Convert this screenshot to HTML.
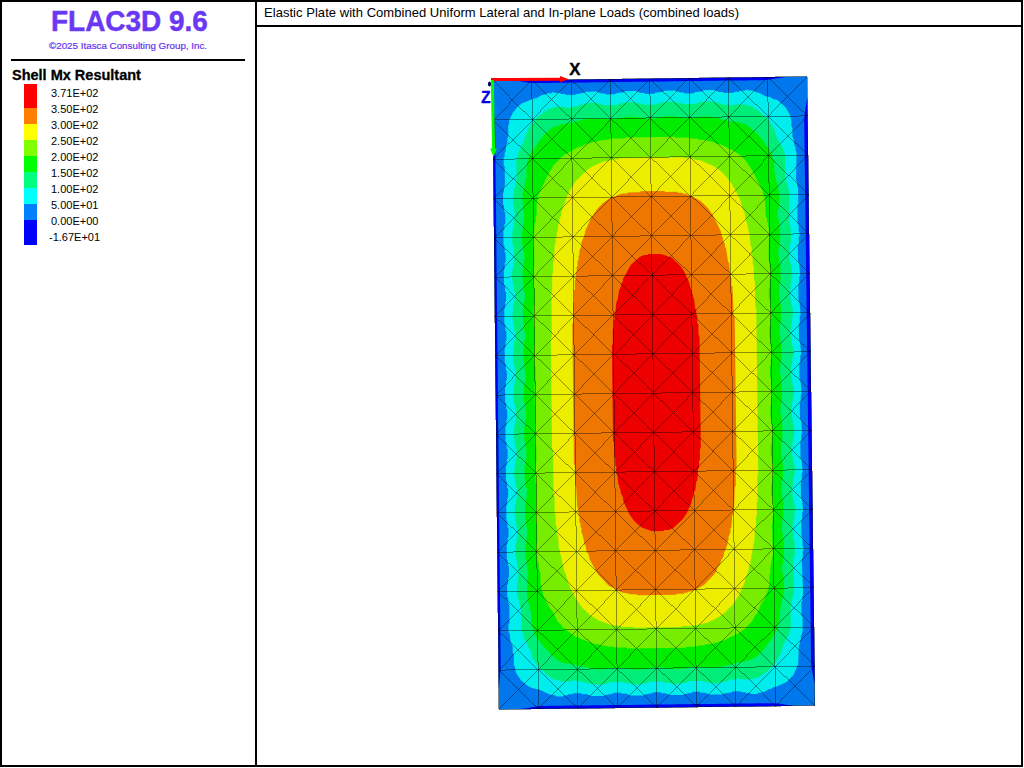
<!DOCTYPE html>
<html><head><meta charset="utf-8"><style>
html,body{margin:0;padding:0;background:#fff;width:1024px;height:768px;overflow:hidden}
body{position:relative;font-family:"Liberation Sans",sans-serif}
.a{position:absolute;white-space:nowrap}
#frame{position:absolute;left:0;top:0;width:1023px;height:767px;box-sizing:border-box;border:2px solid #000}
#vdiv{position:absolute;left:255px;top:0;width:2px;height:767px;background:#000}
#hdiv{position:absolute;left:255px;top:25px;width:768px;height:2px;background:#000}
#sep{position:absolute;left:11px;top:59px;width:234px;height:2px;background:#000}
.title{left:264px;top:5px;font-size:13px;color:#000;letter-spacing:0.04px}
.logo{left:50.6px;top:2.5px;font-size:30.4px;font-weight:bold;color:#6A38F4;-webkit-text-stroke:0.5px #6A38F4;transform:scaleX(0.92);transform-origin:0 0}
.copy{left:49px;top:40px;font-size:9.8px;color:#6633F0;-webkit-text-stroke:0.2px #6633F0}
.lt{left:12px;top:66.7px;font-size:14.5px;font-weight:bold;color:#000;-webkit-text-stroke:0.3px #000}
.bar{position:absolute;left:24px;width:13px}
.lab{left:51px;font-size:11px;color:#000;margin-top:1px}
svg{position:absolute;left:0;top:0}
</style></head><body>
<div id="frame"></div>
<div id="vdiv"></div>
<div id="hdiv"></div>
<div id="sep"></div>
<div class="a title">Elastic Plate with Combined Uniform Lateral and In-plane Loads (combined loads)</div>
<div class="a logo">FLAC3D 9.6</div>
<div class="a copy">&copy;2025 Itasca Consulting Group, Inc.</div>
<div class="a lt">Shell Mx Resultant</div>
<div class="bar" style="top:84px;height:24px;background:#FF0000"></div>
<div class="bar" style="top:108px;height:16px;background:#FF8000"></div>
<div class="bar" style="top:124px;height:16px;background:#FFFF00"></div>
<div class="bar" style="top:140px;height:16px;background:#80FF00"></div>
<div class="bar" style="top:156px;height:16px;background:#00FF00"></div>
<div class="bar" style="top:172px;height:16px;background:#00FF80"></div>
<div class="bar" style="top:188px;height:16px;background:#00FFFF"></div>
<div class="bar" style="top:204px;height:16px;background:#0080FF"></div>
<div class="bar" style="top:220px;height:25px;background:#0000FF"></div>
<div class="a lab" style="top:86px">3.71E+02</div>
<div class="a lab" style="top:102px">3.50E+02</div>
<div class="a lab" style="top:118px">3.00E+02</div>
<div class="a lab" style="top:134px">2.50E+02</div>
<div class="a lab" style="top:150px">2.00E+02</div>
<div class="a lab" style="top:166px">1.50E+02</div>
<div class="a lab" style="top:182px">1.00E+02</div>
<div class="a lab" style="top:198px">5.00E+01</div>
<div class="a lab" style="top:214px">0.00E+00</div>
<div class="a lab" style="top:230px;left:49px">-1.67E+01</div>
<svg width="1024" height="768" viewBox="0 0 1024 768">
<path fill="#0077ED" d="M492.5 80.7L807.0 76.6L815.0 705.6L499.0 709.4 Z"/><path fill="#0000F0" d="M492.5 80.7L497.7 80.6L503.0 80.6L508.2 80.5L513.5 80.4L518.7 80.4L524.0 80.3L529.2 80.2L534.4 80.2L539.7 80.1L544.9 80.0L550.2 79.9L555.4 79.9L560.6 79.8L565.9 79.7L571.1 79.7L576.4 79.6L581.6 79.5L586.9 79.5L592.1 79.4L597.3 79.3L602.6 79.3L607.8 79.2L613.1 79.1L618.3 79.1L623.5 79.0L628.8 78.9L634.0 78.9L639.3 78.8L644.5 78.7L649.8 78.7L655.0 78.6L660.2 78.5L665.5 78.4L670.7 78.4L676.0 78.3L681.2 78.2L686.4 78.2L691.7 78.1L696.9 78.0L702.2 78.0L707.4 77.9L712.6 77.8L717.9 77.8L723.1 77.7L728.4 77.6L733.6 77.6L738.9 77.5L744.1 77.4L749.3 77.4L754.6 77.3L759.8 77.2L765.1 77.1L770.3 77.1L775.6 77.0L780.8 76.9L786.0 76.9L791.3 76.8L796.5 76.7L801.8 76.7L807.0 76.6L807.0 76.6L801.8 76.7L796.5 76.7L791.3 76.8L786.0 76.9L780.8 77.7L775.6 78.6L770.3 79.6L765.1 80.1L759.9 80.2L754.6 80.2L749.4 80.3L744.1 80.4L738.9 80.4L733.7 80.5L728.4 80.6L723.2 80.6L717.9 80.7L712.7 80.8L707.4 80.8L702.2 80.9L697.0 81.0L691.7 81.1L686.5 81.1L681.2 81.2L676.0 81.3L670.8 81.3L665.5 81.4L660.3 81.5L655.0 81.5L649.8 81.6L644.5 81.7L639.3 81.7L634.1 81.8L628.8 81.9L623.6 81.9L618.3 82.0L613.1 82.1L607.8 82.1L602.6 82.2L597.4 82.3L592.1 82.3L586.9 82.4L581.6 82.5L576.4 82.6L571.2 82.6L565.9 82.7L560.7 82.8L555.4 82.8L550.2 82.9L544.9 83.0L539.7 83.0L534.5 83.1L529.2 82.7L524.0 81.9L518.7 81.1L513.5 80.4L508.2 80.5L503.0 80.6L497.7 80.6L492.5 80.7ZM499.0 709.4L504.3 709.3L509.5 709.3L514.8 709.2L520.1 709.1L525.3 709.1L530.6 709.0L535.9 709.0L541.1 708.9L546.4 708.8L551.7 708.8L556.9 708.7L562.2 708.6L567.5 708.6L572.7 708.5L578.0 708.4L583.3 708.4L588.5 708.3L593.8 708.3L599.1 708.2L604.3 708.1L609.6 708.1L614.9 708.0L620.1 707.9L625.4 707.9L630.7 707.8L635.9 707.8L641.2 707.7L646.5 707.6L651.7 707.6L657.0 707.5L662.3 707.4L667.5 707.4L672.8 707.3L678.1 707.2L683.3 707.2L688.6 707.1L693.9 707.1L699.1 707.0L704.4 706.9L709.7 706.9L714.9 706.8L720.2 706.7L725.5 706.7L730.7 706.6L736.0 706.6L741.3 706.5L746.5 706.4L751.8 706.4L757.1 706.3L762.3 706.2L767.6 706.2L772.9 706.1L778.1 706.0L783.4 706.0L788.7 705.9L793.9 705.9L799.2 705.8L804.5 705.7L809.7 705.7L815.0 705.6L815.0 705.6L809.7 705.7L804.5 705.7L799.2 705.8L793.9 705.9L788.7 705.2L783.4 704.3L778.1 703.5L772.8 703.2L767.6 703.2L762.3 703.3L757.0 703.3L751.8 703.4L746.5 703.5L741.2 703.5L736.0 703.6L730.7 703.7L725.4 703.7L720.2 703.8L714.9 703.9L709.6 703.9L704.4 704.0L699.1 704.0L693.8 704.1L688.6 704.2L683.3 704.2L678.0 704.3L672.8 704.4L667.5 704.4L662.2 704.5L657.0 704.6L651.7 704.6L646.4 704.7L641.2 704.7L635.9 704.8L630.6 704.9L625.4 704.9L620.1 705.0L614.8 705.1L609.6 705.1L604.3 705.2L599.0 705.2L593.8 705.3L588.5 705.4L583.2 705.4L578.0 705.5L572.7 705.6L567.4 705.6L562.2 705.7L556.9 705.8L551.6 705.8L546.4 705.9L541.1 705.9L535.8 706.4L530.6 707.4L525.3 708.3L520.1 709.1L514.8 709.2L509.5 709.3L504.3 709.3L499.0 709.4ZM492.5 80.7L492.6 91.2L492.7 101.7L492.8 112.1L492.9 122.6L493.0 133.1L493.1 143.6L493.3 154.0L493.4 164.5L493.5 175.0L493.6 185.5L493.7 196.0L493.8 206.4L493.9 216.9L494.0 227.4L494.1 237.9L494.2 248.4L494.3 258.8L494.4 269.3L494.6 279.8L494.7 290.3L494.8 300.7L494.9 311.2L495.0 321.7L495.1 332.2L495.2 342.7L495.3 353.1L495.4 363.6L495.5 374.1L495.6 384.6L495.8 395.1L495.9 405.5L496.0 416.0L496.1 426.5L496.2 437.0L496.3 447.4L496.4 457.9L496.5 468.4L496.6 478.9L496.7 489.4L496.8 499.8L496.9 510.3L497.0 520.8L497.2 531.3L497.3 541.7L497.4 552.2L497.5 562.7L497.6 573.2L497.7 583.7L497.8 594.1L497.9 604.6L498.0 615.1L498.1 625.6L498.2 636.1L498.4 646.5L498.5 657.0L498.6 667.5L498.7 678.0L498.8 688.4L498.9 698.9L499.0 709.4L499.0 709.4L498.9 698.9L498.8 688.4L499.9 678.0L500.7 667.5L500.6 657.0L500.5 646.5L500.4 636.0L500.3 625.5L500.2 615.1L500.1 604.6L500.0 594.1L499.9 583.6L499.8 573.2L499.7 562.7L499.5 552.2L499.4 541.7L499.3 531.2L499.2 520.8L499.1 510.3L499.0 499.8L498.9 489.3L498.8 478.8L498.7 468.4L498.6 457.9L498.5 447.4L498.4 436.9L498.2 426.5L498.1 416.0L498.0 405.5L497.9 395.0L497.8 384.5L497.7 374.1L497.6 363.6L497.5 353.1L497.4 342.6L497.3 332.2L497.2 321.7L497.0 311.2L496.9 300.7L496.8 290.2L496.7 279.8L496.6 269.3L496.5 258.8L496.4 248.3L496.3 237.8L496.2 227.4L496.1 216.9L496.0 206.4L495.9 195.9L495.7 185.5L495.6 175.0L495.5 164.5L495.4 154.0L495.3 143.5L495.2 133.1L495.1 122.6L494.0 112.1L492.7 101.7L492.6 91.2L492.5 80.7ZM807.0 76.6L807.1 87.1L807.3 97.6L807.4 108.0L807.5 118.5L807.7 129.0L807.8 139.5L807.9 150.0L808.1 160.5L808.2 170.9L808.3 181.4L808.5 191.9L808.6 202.4L808.7 212.9L808.9 223.4L809.0 233.8L809.1 244.3L809.3 254.8L809.4 265.3L809.5 275.8L809.7 286.3L809.8 296.8L809.9 307.2L810.1 317.7L810.2 328.2L810.3 338.7L810.5 349.2L810.6 359.7L810.7 370.1L810.9 380.6L811.0 391.1L811.1 401.6L811.3 412.1L811.4 422.6L811.5 433.0L811.7 443.5L811.8 454.0L811.9 464.5L812.1 475.0L812.2 485.5L812.3 495.9L812.5 506.4L812.6 516.9L812.7 527.4L812.9 537.9L813.0 548.4L813.1 558.8L813.3 569.3L813.4 579.8L813.5 590.3L813.7 600.8L813.8 611.2L813.9 621.7L814.1 632.2L814.2 642.7L814.3 653.2L814.5 663.7L814.6 674.1L814.7 684.6L814.9 695.1L815.0 705.6L815.0 705.6L814.9 695.1L814.7 684.6L812.7 674.2L811.1 663.7L811.0 653.2L810.8 642.7L810.7 632.3L810.6 621.8L810.4 611.3L810.3 600.8L810.2 590.3L810.0 579.8L809.9 569.4L809.8 558.9L809.6 548.4L809.5 537.9L809.4 527.4L809.2 516.9L809.1 506.5L809.0 496.0L808.8 485.5L808.7 475.0L808.6 464.5L808.4 454.0L808.3 443.6L808.2 433.1L808.0 422.6L807.9 412.1L807.8 401.6L807.7 391.1L807.5 380.7L807.4 370.2L807.3 359.7L807.1 349.2L807.0 338.7L806.9 328.2L806.7 317.8L806.6 307.3L806.5 296.8L806.3 286.3L806.2 275.8L806.1 265.3L805.9 254.9L805.8 244.4L805.7 233.9L805.5 223.4L805.4 212.9L805.3 202.4L805.1 192.0L805.0 181.5L804.9 171.0L804.7 160.5L804.6 150.0L804.5 139.5L804.3 129.1L804.2 118.6L805.5 108.1L807.3 97.6L807.1 87.1L807.0 76.6Z"/><path fill="#00EDED" d="M541.3 95.3L536.4 98.3L534.5 98.3L521.7 103.4L517.8 106.4L513.0 112.4L509.1 120.3L509.2 124.2L508.2 125.2L508.3 137.0L507.4 138.0L507.4 142.9L506.4 143.9L505.5 151.8L504.6 152.8L504.6 156.7L503.6 157.7L503.7 165.5L504.7 166.5L504.9 186.2L503.9 187.2L504.0 192.1L503.0 193.1L503.1 204.8L504.1 205.8L504.2 211.7L505.2 212.7L505.3 223.5L504.3 224.5L504.4 229.4L503.4 230.4L503.5 245.1L504.5 246.1L504.6 252.0L505.6 253.0L505.7 261.8L504.7 262.8L504.8 268.7L503.8 269.7L504.0 284.4L505.0 285.4L505.0 291.3L506.0 292.3L506.1 301.1L505.1 302.1L505.2 308.0L504.2 309.0L504.4 323.7L505.4 324.7L505.4 330.6L506.4 331.5L506.5 340.4L505.5 341.4L505.6 347.3L504.6 348.3L504.8 363.0L505.8 364.0L505.8 369.9L506.8 370.8L506.9 379.7L505.9 380.7L506.0 386.6L505.0 387.6L505.2 402.3L506.2 403.3L506.2 409.2L507.2 410.1L507.3 419.0L506.4 420.0L506.4 425.9L505.4 426.9L505.6 441.6L506.6 442.6L506.7 448.5L507.6 449.4L507.7 458.3L506.8 459.3L506.8 465.2L505.9 466.2L506.0 480.9L507.0 481.9L507.1 487.8L508.1 488.7L508.1 497.6L507.2 498.6L507.2 504.5L506.3 505.4L506.4 520.2L507.4 521.2L507.5 527.0L508.5 528.0L508.6 536.9L507.6 537.9L507.6 543.7L506.7 544.7L506.8 559.5L507.8 560.4L507.9 565.4L508.9 566.3L509.0 577.1L508.0 578.1L508.1 584.0L507.1 585.0L507.2 596.8L508.2 597.8L508.3 602.7L509.3 603.7L509.5 623.3L508.5 624.3L508.6 632.2L509.6 633.1L510.6 642.0L512.7 646.8L512.7 652.7L513.7 653.7L513.8 665.5L514.8 666.5L515.9 672.4L520.9 680.2L527.9 686.0L531.9 687.9L539.8 689.8L549.7 694.5L555.6 695.5L556.6 696.4L562.6 696.4L563.5 695.4L567.5 695.3L568.5 694.3L572.4 694.3L573.4 693.3L581.3 693.2L582.3 694.2L586.2 694.1L591.2 696.0L604.0 695.9L605.0 694.9L612.9 693.8L613.9 692.8L620.8 692.7L621.8 693.7L625.7 693.6L630.7 695.5L643.5 695.4L644.5 694.4L652.4 693.3L653.4 692.3L660.3 692.2L661.3 693.2L665.2 693.2L670.2 695.1L683.0 694.9L684.0 693.9L691.9 692.8L692.9 691.8L699.8 691.8L700.8 692.7L704.7 692.7L709.7 694.6L722.5 694.4L723.5 693.4L731.4 692.4L732.4 691.4L740.3 691.3L741.3 692.2L745.2 692.2L746.2 693.2L750.2 693.1L751.2 694.1L757.1 694.0L758.1 693.0L764.0 692.0L768.9 689.0L770.8 688.9L773.8 686.9L775.8 686.9L786.6 681.9L793.4 674.9L798.2 664.0L798.9 645.3L799.9 644.3L799.9 640.4L800.8 639.4L800.8 636.5L802.7 631.5L802.5 616.8L801.5 615.8L801.3 602.1L802.3 601.1L802.3 596.2L803.2 595.2L801.8 558.8L802.8 557.8L802.7 550.9L803.6 549.9L803.6 547.0L802.6 546.0L802.5 538.2L801.5 537.2L801.3 520.5L802.3 519.5L802.2 512.6L803.2 511.6L802.0 498.8L801.0 497.9L800.8 481.2L801.8 480.2L801.7 473.3L802.7 472.3L801.5 459.5L800.5 458.6L800.3 441.9L801.3 440.9L801.2 434.0L802.2 433.0L801.0 420.2L800.0 419.3L799.8 402.5L800.8 401.5L800.7 394.7L801.7 393.7L800.5 380.9L799.5 379.9L799.3 363.2L800.3 362.2L800.2 355.4L801.2 354.4L800.0 341.6L799.0 340.6L798.8 323.9L799.8 322.9L799.7 316.0L800.7 315.1L799.5 302.3L798.5 301.3L798.3 284.6L799.3 283.6L799.2 276.7L800.2 275.7L799.0 263.0L798.0 262.0L797.8 245.3L798.8 244.3L798.7 236.4L799.7 235.4L799.6 232.5L798.6 231.5L798.6 224.6L797.6 223.7L797.3 205.0L798.3 204.0L798.1 187.3L797.1 186.3L797.0 181.4L796.0 180.4L796.6 151.9L795.7 151.0L795.6 147.0L794.6 146.1L793.5 138.2L792.5 137.2L792.4 127.4L791.4 126.4L791.3 118.6L790.3 117.6L790.3 115.6L785.3 106.9L777.3 100.1L773.4 99.2L770.4 97.2L765.5 96.3L758.5 92.5L756.6 92.5L752.6 90.6L748.7 90.6L747.7 89.7L745.7 89.7L744.8 90.7L739.8 90.7L738.9 91.7L734.9 91.8L734.0 92.8L724.1 92.9L723.1 91.9L719.2 92.0L714.3 90.1L703.5 90.2L702.5 91.2L694.6 92.3L693.7 93.3L684.8 93.4L683.8 92.5L679.9 92.5L675.0 90.6L664.1 90.7L663.2 91.7L655.3 92.8L654.3 93.8L645.5 93.9L644.5 93.0L640.6 93.0L635.6 91.1L624.8 91.3L623.9 92.3L616.0 93.3L615.0 94.3L606.2 94.4L605.2 93.5L601.3 93.5L596.3 91.6L585.5 91.8L584.5 92.8L576.7 93.9L575.7 94.8L565.9 95.0L564.9 94.0L561.0 94.1L560.0 93.1L555.1 93.1L554.1 92.2L552.1 92.2L551.1 93.2L547.2 93.3L546.2 94.2Z"/><path fill="#00ED77" d="M548.3 109.0L537.6 117.0L529.8 125.9L525.0 136.8L525.1 138.7L522.2 143.7L522.2 145.7L518.3 152.6L518.3 154.5L516.4 158.5L516.7 181.1L515.7 182.1L515.7 186.0L514.7 187.0L513.8 193.9L512.9 194.9L513.0 205.7L514.0 206.7L515.1 219.4L514.1 220.4L514.2 225.3L513.2 226.3L513.2 230.3L512.3 231.3L512.4 245.0L513.4 246.0L513.5 250.9L514.4 251.9L514.5 261.7L513.6 262.7L513.6 267.6L512.7 268.6L511.8 278.4L512.8 279.4L512.8 285.3L513.8 286.3L513.9 291.2L514.9 292.1L515.0 301.0L514.0 302.0L512.2 318.7L513.2 319.7L513.2 324.6L514.2 325.6L514.3 330.5L515.3 331.4L515.4 340.3L514.4 341.3L512.6 358.0L513.6 359.0L513.7 363.9L514.6 364.8L514.7 369.8L515.7 370.7L515.8 379.6L514.8 380.6L513.0 397.3L514.0 398.3L514.1 403.2L515.1 404.1L515.1 409.1L516.1 410.0L516.2 418.9L515.2 419.9L513.4 436.6L514.4 437.6L514.5 442.5L515.5 443.4L515.5 448.3L516.5 449.3L516.6 458.2L515.6 459.2L513.8 475.9L514.8 476.8L514.9 481.8L515.9 482.7L515.9 487.6L516.9 488.6L517.0 497.5L516.0 498.4L516.1 503.4L515.1 504.4L514.2 514.2L515.2 515.2L515.3 521.1L516.3 522.0L516.3 526.9L517.3 527.9L517.4 537.7L516.5 538.7L516.5 543.6L515.5 544.6L515.7 558.4L516.7 559.4L517.8 569.2L518.8 570.1L517.9 582.9L516.9 583.9L517.1 594.7L518.1 595.7L518.1 599.6L519.1 600.6L520.2 607.5L521.1 608.4L521.4 631.0L522.4 632.0L523.4 636.9L527.4 643.7L527.5 645.7L530.5 650.6L532.5 657.4L538.5 667.2L548.5 675.9L554.5 679.7L556.5 679.7L560.4 681.6L571.3 681.5L572.3 680.5L577.2 680.5L578.2 681.4L583.1 681.4L587.1 683.3L595.0 684.2L596.0 685.1L605.9 684.0L610.8 682.0L623.6 681.9L624.6 682.8L632.5 683.7L633.5 684.7L640.4 684.6L641.4 683.6L645.4 683.6L650.3 681.5L663.1 681.4L664.1 682.4L672.0 683.2L673.0 684.2L679.9 684.1L680.9 683.1L684.9 683.1L689.8 681.1L702.6 680.9L707.6 682.8L717.5 683.7L718.4 682.7L726.3 681.6L730.2 679.6L736.2 679.5L737.1 678.5L740.1 678.5L741.1 679.5L753.0 679.3L753.9 678.3L758.8 677.3L768.6 670.3L775.5 663.3L781.3 652.4L783.1 645.5L788.9 634.7L788.9 632.7L790.8 628.7L790.5 606.1L791.5 605.1L791.5 601.2L792.4 600.2L792.4 597.3L794.3 592.3L792.9 561.9L793.9 560.9L793.9 556.9L794.8 555.9L794.6 540.2L793.6 539.2L793.6 533.4L792.6 532.4L792.5 525.5L793.5 524.5L793.4 519.6L794.4 518.6L794.3 513.7L795.3 512.7L795.2 505.8L794.2 504.8L794.1 499.9L793.1 499.0L792.0 487.2L793.0 486.2L792.9 480.3L793.9 479.3L793.8 475.4L794.8 474.4L794.7 465.5L793.7 464.5L791.5 447.9L792.5 446.9L792.4 442.0L793.4 441.0L793.3 436.0L794.3 435.1L794.2 426.2L793.2 425.2L791.0 408.6L792.0 407.6L791.9 402.6L792.9 401.6L792.8 396.7L793.8 395.7L793.7 386.9L792.7 385.9L790.5 369.2L791.5 368.2L791.4 363.3L792.4 362.3L792.3 357.4L793.3 356.4L793.2 347.6L792.2 346.6L790.0 329.9L791.0 328.9L790.9 324.0L791.9 323.0L791.9 318.1L792.8 317.1L792.7 308.3L791.7 307.3L791.7 303.4L790.7 302.4L789.5 290.6L790.5 289.6L790.4 283.7L791.4 282.7L791.3 277.8L792.3 276.8L792.2 269.9L791.2 269.0L791.2 264.1L790.2 263.1L790.1 258.2L789.1 257.2L789.0 250.3L790.0 249.3L789.9 243.4L790.9 242.4L790.7 226.7L789.7 225.7L789.7 221.8L788.7 220.8L789.3 190.4L788.3 189.4L788.2 186.4L786.2 181.6L786.2 177.6L785.2 176.7L784.9 154.0L783.9 153.1L782.8 148.2L776.8 137.4L774.7 130.6L768.7 119.9L756.8 109.2L753.8 108.3L751.8 106.3L749.9 106.3L745.9 104.4L734.1 104.6L733.1 105.6L730.2 105.6L729.2 104.6L723.3 104.7L719.3 102.8L711.5 101.9L710.5 101.0L700.7 102.1L695.8 104.1L683.0 104.3L682.0 103.3L674.1 102.4L673.1 101.4L666.2 101.5L665.3 102.5L661.3 102.6L656.4 104.6L643.7 104.8L642.7 103.8L634.8 102.9L633.8 102.0L626.9 102.0L625.9 103.0L622.0 103.1L617.1 105.1L604.3 105.3L599.4 103.4L589.6 102.5L588.6 103.5L584.7 103.6L583.7 104.6L580.7 104.6L576.8 106.6L571.9 106.7L570.9 107.7L566.0 107.7L565.0 106.8L554.2 106.9L553.2 107.9Z"/><path fill="#00ED00" d="M560.3 124.5L559.3 125.5L554.4 126.6L548.6 130.6L542.7 136.5L531.1 152.4L527.3 161.3L527.3 166.2L526.3 167.2L526.5 178.0L525.5 179.0L525.5 182.9L524.6 183.9L524.6 186.9L522.7 191.8L522.7 198.7L521.8 199.7L522.8 201.6L522.9 210.5L523.9 211.5L524.0 223.2L523.0 224.2L523.1 229.2L522.1 230.1L522.2 244.9L523.2 245.9L523.3 251.7L524.3 252.7L524.4 261.6L523.4 262.6L523.5 268.4L522.5 269.4L522.7 284.2L523.7 285.1L523.7 291.0L524.7 292.0L524.8 300.9L523.8 301.9L523.9 307.7L522.9 308.7L523.1 323.5L524.1 324.4L524.1 330.3L525.1 331.3L525.2 340.2L524.2 341.1L524.3 347.0L523.3 348.0L523.5 362.8L524.5 363.7L524.5 369.6L525.5 370.6L525.6 379.4L524.7 380.4L524.7 386.3L523.7 387.3L523.9 402.1L524.9 403.0L525.0 408.9L526.0 409.9L526.1 418.7L525.1 419.7L525.1 425.6L524.2 426.6L524.3 441.4L525.3 442.3L525.4 448.2L526.4 449.2L526.5 458.0L525.5 459.0L525.6 464.9L524.6 465.9L524.7 480.7L525.7 481.6L525.8 487.5L526.8 488.5L526.9 497.3L525.9 498.3L526.0 504.2L525.0 505.2L525.1 520.0L526.1 520.9L526.2 526.8L527.2 527.8L527.3 536.6L526.3 537.6L526.4 543.5L525.4 544.5L525.6 559.2L526.6 560.2L526.6 565.1L527.6 566.1L527.0 597.5L528.0 598.5L528.0 601.5L530.0 606.4L530.0 610.3L531.0 611.3L531.2 622.1L532.2 623.0L532.2 627.9L533.2 628.9L533.2 630.9L538.3 639.7L544.3 647.4L549.3 652.3L549.3 653.3L557.2 660.1L563.2 662.9L571.1 663.8L572.1 664.8L576.0 664.7L577.0 665.7L581.0 665.7L582.0 666.6L584.9 666.6L589.9 668.5L594.8 668.5L595.8 669.4L605.7 669.3L606.7 668.3L624.5 668.1L625.5 669.1L633.4 669.0L634.4 669.9L648.2 668.8L649.1 667.8L663.9 667.6L664.9 668.6L672.8 668.5L673.8 669.5L687.6 668.3L688.6 667.3L706.4 667.1L707.4 668.1L717.3 668.0L718.2 667.0L723.2 666.9L724.2 665.9L727.1 665.9L728.1 664.9L731.1 664.8L736.0 662.8L739.9 662.8L740.9 661.8L744.8 661.7L745.8 660.7L750.7 659.7L757.6 655.7L764.4 648.7L764.4 647.7L771.2 639.8L778.0 627.9L778.9 621.0L779.9 620.0L779.7 610.2L780.7 609.2L780.7 604.3L781.6 603.3L781.6 600.3L783.5 595.4L783.4 590.5L784.4 589.5L783.2 573.8L782.2 572.8L782.1 564.9L783.1 564.0L783.0 558.1L784.0 557.1L783.8 540.4L782.8 539.4L782.7 532.5L781.7 531.5L782.5 518.7L783.5 517.7L783.3 501.0L782.3 500.1L782.2 493.2L781.2 492.2L782.1 479.4L783.0 478.4L782.8 461.7L781.8 460.8L781.7 453.9L780.7 452.9L781.6 440.1L782.5 439.1L782.3 422.4L781.3 421.5L781.2 414.6L780.2 413.6L781.1 400.8L782.0 399.8L781.8 383.1L780.8 382.1L780.8 375.3L779.8 374.3L780.6 361.5L781.6 360.5L781.3 343.8L780.3 342.8L780.3 336.0L779.3 335.0L780.1 322.2L781.1 321.2L780.9 304.5L779.9 303.5L779.8 296.6L778.8 295.7L779.6 282.9L780.6 281.9L780.4 265.2L779.4 264.2L779.3 257.3L778.3 256.4L779.1 243.6L780.1 242.6L779.9 225.9L778.9 224.9L778.8 219.0L777.8 218.0L777.7 210.2L778.7 209.2L779.5 193.4L778.5 192.5L778.4 187.6L777.4 186.6L777.4 183.6L775.3 178.7L775.3 173.8L774.3 172.9L774.2 162.1L773.2 161.1L772.1 155.2L769.1 149.3L759.1 135.7L747.1 125.1L739.2 122.2L725.5 120.4L724.5 119.4L721.5 119.5L716.6 117.6L712.6 117.6L711.6 116.7L698.9 116.8L697.9 117.8L684.1 118.0L683.1 117.0L676.2 117.1L675.3 116.2L664.4 116.3L663.5 117.3L656.6 117.4L655.6 118.4L644.8 118.5L643.8 117.5L636.9 117.6L635.9 116.7L625.1 116.8L624.1 117.8L617.3 117.9L616.3 118.9L587.8 118.3L586.8 119.3L582.9 119.3L581.9 120.3L578.9 120.4L574.1 122.4Z"/><path fill="#77ED00" d="M597.9 140.7L596.9 141.7L592.9 141.8L592.0 142.8L586.1 143.8L580.2 146.9L578.3 146.9L562.6 155.9L552.9 165.9L551.9 168.8L550.0 170.8L538.4 194.6L538.5 197.5L536.6 202.5L536.7 215.2L535.7 216.2L535.8 222.1L534.8 223.1L533.9 232.9L533.0 233.9L533.1 245.7L534.1 246.7L534.3 265.4L533.3 266.4L533.5 287.0L534.5 288.0L534.7 304.7L533.7 305.7L533.9 326.3L534.9 327.3L535.1 344.0L534.1 345.0L534.4 365.6L535.4 366.6L535.5 383.3L534.6 384.2L534.8 404.9L535.8 405.8L535.9 422.5L535.0 423.5L535.2 444.2L536.2 445.1L536.4 461.8L535.4 462.8L535.6 483.5L536.6 484.4L536.0 522.8L537.0 523.7L537.2 542.4L536.2 543.4L536.4 555.2L537.4 556.2L537.4 561.1L538.4 562.0L539.5 571.8L540.5 572.8L540.6 584.6L541.6 585.6L541.7 590.5L542.7 591.5L543.7 596.4L549.8 608.1L551.8 610.0L557.8 621.7L561.8 625.6L561.8 626.6L574.7 636.3L594.6 643.9L597.5 643.9L602.5 645.8L606.4 645.7L607.4 646.7L613.4 646.6L614.4 647.6L626.2 647.4L627.2 648.4L685.4 647.7L686.4 646.7L697.3 646.6L698.2 645.6L704.2 645.5L705.1 644.5L714.0 643.4L715.0 642.4L717.9 642.4L718.9 641.4L723.8 640.4L738.6 633.3L744.4 629.3L752.2 621.3L755.1 615.4L757.1 613.4L761.9 602.5L763.8 600.6L768.6 588.7L768.6 585.8L769.6 584.8L769.4 574.9L770.4 573.9L770.3 566.1L771.3 565.1L771.2 561.1L772.2 560.2L772.2 556.2L773.1 555.2L771.8 523.8L772.7 522.8L772.6 515.9L773.6 514.9L773.5 504.1L772.5 503.1L772.4 496.3L771.4 495.3L771.3 484.5L772.2 483.5L772.2 476.6L773.1 475.6L773.0 464.8L772.0 463.8L771.9 457.0L770.9 456.0L770.8 445.2L771.8 444.2L771.7 437.3L772.6 436.3L772.5 425.5L771.5 424.5L771.4 417.6L770.4 416.7L770.3 405.9L771.3 404.9L771.2 398.0L772.2 397.0L772.0 386.2L771.0 385.2L770.9 378.3L769.9 377.4L769.8 366.6L770.8 365.6L770.7 358.7L771.7 357.7L771.5 346.9L770.5 345.9L770.4 339.0L769.5 338.1L769.3 327.2L770.3 326.2L770.2 319.4L771.2 318.4L771.0 307.6L770.0 306.6L770.0 299.7L769.0 298.7L768.8 287.9L769.8 286.9L769.7 280.1L770.7 279.1L770.6 268.3L769.6 267.3L769.5 260.4L768.5 259.4L769.1 228.0L768.1 227.0L768.0 223.1L767.0 222.1L767.0 218.2L766.0 217.2L764.8 197.6L763.8 196.6L762.7 190.7L751.6 169.2L745.6 160.5L740.6 155.6L733.7 150.8L719.8 144.1L717.9 144.1L711.0 141.2L708.0 141.3L707.0 140.3L698.1 139.4L697.2 138.5L690.3 138.6L689.3 137.6L675.5 137.8L674.5 136.8L625.4 137.4L624.4 138.4L610.6 138.6L609.6 139.6Z"/><path fill="#EDED00" d="M612.8 159.2L611.8 160.2L604.0 161.3L592.2 166.4L586.4 170.4L575.7 181.3L569.9 190.2L565.1 201.1L565.1 203.1L563.2 206.0L563.2 208.0L561.3 212.0L561.3 214.9L559.4 218.9L559.4 222.8L558.4 223.8L557.5 231.7L556.6 232.7L556.6 237.6L555.6 238.6L555.7 243.5L554.7 244.5L553.9 261.2L552.9 262.2L553.1 273.0L552.1 274.0L552.3 290.7L551.3 291.7L551.8 336.9L550.8 337.9L552.0 448.9L553.0 449.8L553.5 495.0L554.5 496.0L554.7 513.7L555.7 514.7L555.8 525.5L556.8 526.4L556.9 534.3L557.9 535.3L559.0 549.0L560.0 550.0L560.0 553.9L561.0 554.9L561.1 558.8L562.1 559.8L562.1 563.7L563.1 564.7L564.2 571.5L565.2 572.5L568.2 583.3L570.2 586.2L570.3 588.2L575.3 597.9L582.3 607.7L589.3 614.5L598.3 620.3L611.1 625.0L621.0 625.9L622.0 626.9L632.9 626.7L633.9 627.7L681.2 627.1L682.2 626.1L693.1 626.0L694.0 625.0L699.0 624.9L700.0 623.9L706.9 622.9L717.7 617.8L723.5 613.8L733.3 603.9L739.1 595.0L744.9 582.1L744.8 580.1L748.7 570.3L748.6 567.3L750.5 563.4L750.5 559.4L751.5 558.4L751.4 554.5L752.4 553.5L752.3 549.6L753.3 548.6L753.3 543.7L754.2 542.7L755.0 527.9L756.0 526.9L755.9 517.1L756.9 516.1L756.7 502.4L757.7 501.4L757.4 475.8L758.3 474.8L756.3 307.7L755.3 306.8L755.0 281.2L754.0 280.3L753.8 265.5L752.8 264.5L752.7 255.7L751.7 254.7L751.6 246.9L750.6 245.9L749.5 233.1L748.5 232.2L748.4 228.2L747.4 227.3L747.4 223.3L746.4 222.4L744.3 211.6L743.3 210.6L740.2 199.8L732.1 184.2L726.1 176.4L720.2 170.6L713.2 165.8L699.4 160.1L696.4 160.1L691.5 158.2L684.6 158.3L683.6 157.3L619.7 158.1L618.7 159.1Z"/><path fill="#ED7700" d="M627.9 192.4L627.0 193.4L622.1 193.5L609.3 198.6L602.5 203.6L597.6 208.5L590.8 218.5L585.1 231.3L585.1 233.3L581.3 243.1L581.3 246.1L579.4 251.0L579.4 255.0L578.5 256.0L578.5 259.9L577.5 260.9L577.6 265.8L576.6 266.8L576.7 271.7L575.7 272.7L575.8 279.6L574.8 280.6L574.9 289.4L573.9 290.4L574.1 302.2L573.1 303.2L573.3 322.8L572.3 323.8L573.9 464.3L574.8 465.3L575.1 484.9L576.1 485.9L577.3 507.5L578.3 508.5L578.4 515.4L579.4 516.3L579.4 522.2L580.4 523.2L580.5 527.1L581.5 528.1L581.5 533.0L582.5 534.0L584.6 544.8L585.6 545.7L586.6 551.6L588.6 554.5L589.7 559.4L597.7 574.1L608.7 585.7L614.7 588.6L616.7 590.6L618.6 590.5L621.6 592.5L628.5 593.4L629.5 594.3L636.5 594.2L637.4 595.2L675.9 594.7L676.9 593.8L683.8 593.7L684.8 592.7L687.7 592.6L688.7 591.6L691.7 591.6L694.6 589.6L696.6 589.6L704.4 584.6L713.2 575.6L716.1 571.7L718.0 566.7L720.0 564.7L720.9 560.8L723.8 555.8L723.8 553.9L727.6 544.0L727.6 541.0L728.6 540.0L728.5 537.1L730.4 532.2L730.4 528.2L731.4 527.2L732.2 515.4L733.2 514.4L733.1 508.5L734.1 507.5L734.8 486.9L735.8 485.9L735.6 469.2L736.6 468.2L734.7 316.9L733.7 315.9L732.4 286.4L731.4 285.5L731.3 277.6L730.3 276.6L729.1 262.9L728.1 261.9L726.0 248.2L725.0 247.2L725.0 244.3L723.0 240.4L722.9 237.4L721.9 236.4L720.9 231.5L712.8 214.9L707.8 208.1L700.9 201.3L690.9 195.6L689.0 195.6L686.0 193.7L683.1 193.7L682.1 192.7L678.1 192.8L677.1 191.8L665.3 192.0L664.3 191.0L640.7 191.3L639.7 192.3Z"/><path fill="#ED0000" d="M648.3 254.1L647.4 255.1L644.4 255.1L639.5 257.1L630.7 265.1L623.0 279.0L623.0 280.9L621.1 283.9L621.1 285.9L619.2 289.8L617.4 300.7L616.4 301.7L615.5 311.5L614.5 312.5L614.6 319.4L613.6 320.4L613.7 328.2L612.8 329.2L612.9 344.0L611.9 345.0L613.0 441.2L614.0 442.2L614.2 456.9L615.2 457.9L615.3 465.8L616.3 466.7L616.3 473.6L617.3 474.6L618.4 484.4L619.4 485.4L619.5 488.3L620.5 489.3L620.5 492.2L622.5 496.2L623.6 502.0L629.6 514.7L634.6 521.6L641.6 527.4L652.5 531.2L663.3 531.0L664.3 530.0L668.3 530.0L673.2 528.0L682.9 519.0L686.8 513.0L691.6 502.2L691.6 500.2L693.5 496.3L693.5 493.3L695.4 489.4L696.3 481.5L697.3 480.5L698.1 468.7L699.1 467.7L699.0 460.8L700.0 459.8L699.9 449.0L700.8 448.0L699.5 336.0L698.5 335.0L698.4 324.2L697.4 323.2L697.3 315.4L696.3 314.4L696.2 309.5L695.2 308.5L694.1 298.7L693.1 297.7L693.1 294.8L692.1 293.8L692.1 290.9L691.1 289.9L689.0 282.1L684.0 271.3L680.0 265.5L672.0 257.7L661.1 253.9Z"/><path fill="none" stroke="#000" stroke-opacity="0.5" stroke-width="0.8" shape-rendering="crispEdges" d="M492.5 80.7L807.0 76.6M492.9 120.0L807.5 115.9M493.3 159.3L808.0 155.2M493.7 198.6L808.5 194.5M494.1 237.9L809.0 233.8M494.5 277.2L809.5 273.2M494.9 316.5L810.0 312.5M495.3 355.8L810.5 351.8M495.8 395.1L811.0 391.1M496.2 434.3L811.5 430.4M496.6 473.6L812.0 469.7M497.0 512.9L812.5 509.0M497.4 552.2L813.0 548.4M497.8 591.5L813.5 587.7M498.2 630.8L814.0 627.0M498.6 670.1L814.5 666.3M499.0 709.4L815.0 705.6M492.5 80.7L499.0 709.4M531.8 80.2L538.5 708.9M571.1 79.7L578.0 708.4M610.4 79.2L617.5 708.0M649.8 78.7L657.0 707.5M689.1 78.1L696.5 707.0M728.4 77.6L736.0 706.6M767.7 77.1L775.5 706.1M807.0 76.6L815.0 705.6M492.5 80.7L532.2 119.5M531.8 80.2L492.9 120.0M531.8 80.2L571.6 119.0M571.1 79.7L532.2 119.5M571.1 79.7L610.9 118.5M610.4 79.2L571.6 119.0M610.4 79.2L650.2 118.0M649.8 78.7L610.9 118.5M649.8 78.7L689.5 117.4M689.1 78.1L650.2 118.0M689.1 78.1L728.9 116.9M728.4 77.6L689.5 117.4M728.4 77.6L768.2 116.4M767.7 77.1L728.9 116.9M767.7 77.1L807.5 115.9M807.0 76.6L768.2 116.4M492.9 120.0L532.6 158.8M532.2 119.5L493.3 159.3M532.2 119.5L572.0 158.3M571.6 119.0L532.6 158.8M571.6 119.0L611.3 157.8M610.9 118.5L572.0 158.3M610.9 118.5L650.7 157.3M650.2 118.0L611.3 157.8M650.2 118.0L690.0 156.7M689.5 117.4L650.7 157.3M689.5 117.4L729.3 156.2M728.9 116.9L690.0 156.7M728.9 116.9L768.7 155.7M768.2 116.4L729.3 156.2M768.2 116.4L808.0 155.2M807.5 115.9L768.7 155.7M493.3 159.3L533.1 198.1M532.6 158.8L493.7 198.6M532.6 158.8L572.4 197.6M572.0 158.3L533.1 198.1M572.0 158.3L611.8 197.1M611.3 157.8L572.4 197.6M611.3 157.8L651.1 196.6M650.7 157.3L611.8 197.1M650.7 157.3L690.5 196.1M690.0 156.7L651.1 196.6M690.0 156.7L729.8 195.5M729.3 156.2L690.5 196.1M729.3 156.2L769.2 195.0M768.7 155.7L729.8 195.5M768.7 155.7L808.5 194.5M808.0 155.2L769.2 195.0M493.7 198.6L533.5 237.4M533.1 198.1L494.1 237.9M533.1 198.1L572.8 236.9M572.4 197.6L533.5 237.4M572.4 197.6L612.2 236.4M611.8 197.1L572.8 236.9M611.8 197.1L651.6 235.9M651.1 196.6L612.2 236.4M651.1 196.6L690.9 235.4M690.5 196.1L651.6 235.9M690.5 196.1L730.3 234.9M729.8 195.5L690.9 235.4M729.8 195.5L769.6 234.4M769.2 195.0L730.3 234.9M769.2 195.0L809.0 233.8M808.5 194.5L769.6 234.4M494.1 237.9L533.9 276.7M533.5 237.4L494.5 277.2M533.5 237.4L573.3 276.2M572.8 236.9L533.9 276.7M572.8 236.9L612.6 275.7M612.2 236.4L573.3 276.2M612.2 236.4L652.0 275.2M651.6 235.9L612.6 275.7M651.6 235.9L691.4 274.7M690.9 235.4L652.0 275.2M690.9 235.4L730.8 274.2M730.3 234.9L691.4 274.7M730.3 234.9L770.1 273.7M769.6 234.4L730.8 274.2M769.6 234.4L809.5 273.2M809.0 233.8L770.1 273.7M494.5 277.2L534.3 316.0M533.9 276.7L494.9 316.5M533.9 276.7L573.7 315.5M573.3 276.2L534.3 316.0M573.3 276.2L613.1 315.0M612.6 275.7L573.7 315.5M612.6 275.7L652.5 314.5M652.0 275.2L613.1 315.0M652.0 275.2L691.9 314.0M691.4 274.7L652.5 314.5M691.4 274.7L731.2 313.5M730.8 274.2L691.9 314.0M730.8 274.2L770.6 313.0M770.1 273.7L731.2 313.5M770.1 273.7L810.0 312.5M809.5 273.2L770.6 313.0M494.9 316.5L534.7 355.3M534.3 316.0L495.3 355.8M534.3 316.0L574.1 354.8M573.7 315.5L534.7 355.3M573.7 315.5L613.5 354.3M613.1 315.0L574.1 354.8M613.1 315.0L652.9 353.8M652.5 314.5L613.5 354.3M652.5 314.5L692.3 353.3M691.9 314.0L652.9 353.8M691.9 314.0L731.7 352.8M731.2 313.5L692.3 353.3M731.2 313.5L771.1 352.3M770.6 313.0L731.7 352.8M770.6 313.0L810.5 351.8M810.0 312.5L771.1 352.3M495.3 355.8L535.2 394.6M534.7 355.3L495.8 395.1M534.7 355.3L574.6 394.1M574.1 354.8L535.2 394.6M574.1 354.8L614.0 393.6M613.5 354.3L574.6 394.1M613.5 354.3L653.4 393.1M652.9 353.8L614.0 393.6M652.9 353.8L692.8 392.6M692.3 353.3L653.4 393.1M692.3 353.3L732.2 392.1M731.7 352.8L692.8 392.6M731.7 352.8L771.6 391.6M771.1 352.3L732.2 392.1M771.1 352.3L811.0 391.1M810.5 351.8L771.6 391.6M495.8 395.1L535.6 433.9M535.2 394.6L496.2 434.3M535.2 394.6L575.0 433.4M574.6 394.1L535.6 433.9M574.6 394.1L614.4 432.9M614.0 393.6L575.0 433.4M614.0 393.6L653.8 432.4M653.4 393.1L614.4 432.9M653.4 393.1L693.2 431.9M692.8 392.6L653.8 432.4M692.8 392.6L732.7 431.4M732.2 392.1L693.2 431.9M732.2 392.1L772.1 430.9M771.6 391.6L732.7 431.4M771.6 391.6L811.5 430.4M811.0 391.1L772.1 430.9M496.2 434.3L536.0 473.1M535.6 433.9L496.6 473.6M535.6 433.9L575.4 472.7M575.0 433.4L536.0 473.1M575.0 433.4L614.9 472.2M614.4 432.9L575.4 472.7M614.4 432.9L654.3 471.7M653.8 432.4L614.9 472.2M653.8 432.4L693.7 471.2M693.2 431.9L654.3 471.7M693.2 431.9L733.1 470.7M732.7 431.4L693.7 471.2M732.7 431.4L772.6 470.2M772.1 430.9L733.1 470.7M772.1 430.9L812.0 469.7M811.5 430.4L772.6 470.2M496.6 473.6L536.4 512.4M536.0 473.1L497.0 512.9M536.0 473.1L575.9 512.0M575.4 472.7L536.4 512.4M575.4 472.7L615.3 511.5M614.9 472.2L575.9 512.0M614.9 472.2L654.7 511.0M654.3 471.7L615.3 511.5M654.3 471.7L694.2 510.5M693.7 471.2L654.7 511.0M693.7 471.2L733.6 510.0M733.1 470.7L694.2 510.5M733.1 470.7L773.1 509.5M772.6 470.2L733.6 510.0M772.6 470.2L812.5 509.0M812.0 469.7L773.1 509.5M497.0 512.9L536.8 551.7M536.4 512.4L497.4 552.2M536.4 512.4L576.3 551.3M575.9 512.0L536.8 551.7M575.9 512.0L615.7 550.8M615.3 511.5L576.3 551.3M615.3 511.5L655.2 550.3M654.7 511.0L615.7 550.8M654.7 511.0L694.6 549.8M694.2 510.5L655.2 550.3M694.2 510.5L734.1 549.3M733.6 510.0L694.6 549.8M733.6 510.0L773.5 548.8M773.1 509.5L734.1 549.3M773.1 509.5L813.0 548.4M812.5 509.0L773.5 548.8M497.4 552.2L537.2 591.0M536.8 551.7L497.8 591.5M536.8 551.7L576.7 590.6M576.3 551.3L537.2 591.0M576.3 551.3L616.2 590.1M615.7 550.8L576.7 590.6M615.7 550.8L655.6 589.6M655.2 550.3L616.2 590.1M655.2 550.3L695.1 589.1M694.6 549.8L655.6 589.6M694.6 549.8L734.6 588.6M734.1 549.3L695.1 589.1M734.1 549.3L774.0 588.1M773.5 548.8L734.6 588.6M773.5 548.8L813.5 587.7M813.0 548.4L774.0 588.1M497.8 591.5L537.7 630.3M537.2 591.0L498.2 630.8M537.2 591.0L577.1 629.9M576.7 590.6L537.7 630.3M576.7 590.6L616.6 629.4M616.2 590.1L577.1 629.9M616.2 590.1L656.1 628.9M655.6 589.6L616.6 629.4M655.6 589.6L695.6 628.4M695.1 589.1L656.1 628.9M695.1 589.1L735.0 627.9M734.6 588.6L695.6 628.4M734.6 588.6L774.5 627.5M774.0 588.1L735.0 627.9M774.0 588.1L814.0 627.0M813.5 587.7L774.5 627.5M498.2 630.8L538.1 669.6M537.7 630.3L498.6 670.1M537.7 630.3L577.6 669.2M577.1 629.9L538.1 669.6M577.1 629.9L617.1 668.7M616.6 629.4L577.6 669.2M616.6 629.4L656.5 668.2M656.1 628.9L617.1 668.7M656.1 628.9L696.0 667.7M695.6 628.4L656.5 668.2M695.6 628.4L735.5 667.2M735.0 627.9L696.0 667.7M735.0 627.9L775.0 666.8M774.5 627.5L735.5 667.2M774.5 627.5L814.5 666.3M814.0 627.0L775.0 666.8M498.6 670.1L538.5 708.9M538.1 669.6L499.0 709.4M538.1 669.6L578.0 708.4M577.6 669.2L538.5 708.9M577.6 669.2L617.5 708.0M617.1 668.7L578.0 708.4M617.1 668.7L657.0 707.5M656.5 668.2L617.5 708.0M656.5 668.2L696.5 707.0M696.0 667.7L657.0 707.5M696.0 667.7L736.0 706.6M735.5 667.2L696.5 707.0M735.5 667.2L775.5 706.1M775.0 666.8L736.0 706.6M775.0 666.8L815.0 705.6M814.5 666.3L775.5 706.1"/>
<g id="axes">
<path d="M491 79.6L562 79.3" stroke="#FF0000" stroke-width="3" fill="none"/>
<path d="M560 76L569 79.3L560 82.3Z" fill="#FF0000"/>
<path d="M492.3 80L493.6 149" stroke="#00FF00" stroke-width="3" fill="none"/>
<path d="M490 148.5L493.7 156.8L496.8 148.5Z" fill="#00FF00"/>
<ellipse cx="489.5" cy="84" rx="1.6" ry="2.6" fill="#000060"/>
<text x="569.3" y="74.8" font-family="Liberation Sans" font-weight="bold" font-size="16.3" fill="#000" stroke="#000" stroke-width="0.35" textLength="11.2" lengthAdjust="spacingAndGlyphs">X</text>
<text x="481.2" y="102.6" font-family="Liberation Sans" font-weight="bold" font-size="15.8" fill="#0000E0" stroke="#0000E0" stroke-width="0.4" textLength="9.3" lengthAdjust="spacingAndGlyphs">Z</text>
</g>
</svg>
</body></html>
